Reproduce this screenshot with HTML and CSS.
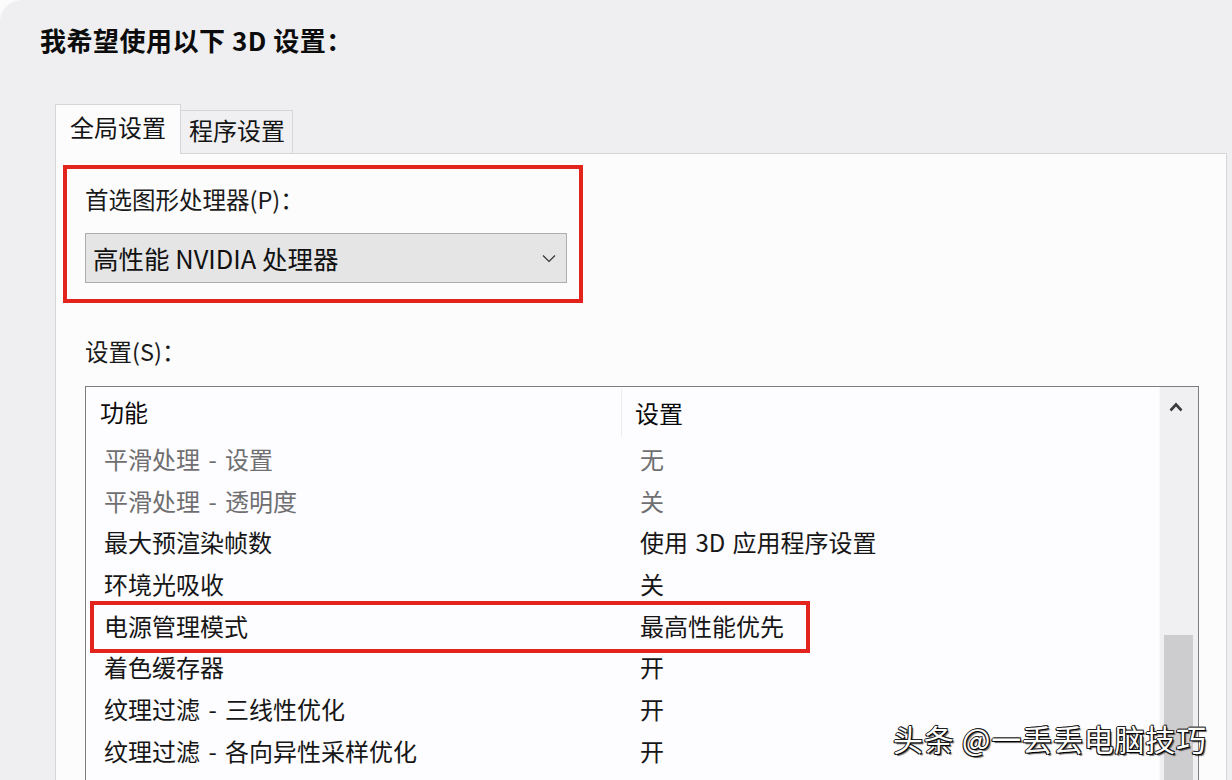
FILE: index.html
```html
<!DOCTYPE html>
<html lang="zh-CN">
<head>
<meta charset="utf-8">
<link rel="stylesheet" href="styles.css">
</head>
<body>
<div class="window">
  <h1 class="title">我希望使用以下 3D 设置：</h1>
  <div class="tabs">
    <div class="tab active">全局设置</div>
    <div class="tab">程序设置</div>
  </div>
  <div class="panel">
    <div class="mark-box">
      <div class="label">首选图形处理器(P)：</div>
      <div class="select">
        <span>高性能 NVIDIA 处理器</span>
        <svg class="chev" width="14" height="9" viewBox="0 0 14 9"><path d="M1 1.5 L7 7.5 L13 1.5" fill="none" stroke="#333" stroke-width="1.2"/></svg>
      </div>
    </div>
    <div class="label settings-label">设置(S)：</div>
    <div class="list">
      <div class="table">
        <div class="row head">
          <div class="c1">功能</div>
          <div class="c2">设置</div>
        </div>
        <div class="row dim"><div class="c1">平滑处理 - 设置</div><div class="c2">无</div></div>
        <div class="row dim"><div class="c1">平滑处理 - 透明度</div><div class="c2">关</div></div>
        <div class="row"><div class="c1">最大预渲染帧数</div><div class="c2">使用 3D 应用程序设置</div></div>
        <div class="row"><div class="c1">环境光吸收</div><div class="c2">关</div></div>
        <div class="row marked"><div class="c1">电源管理模式</div><div class="c2">最高性能优先</div><div class="row-mark"></div></div>
        <div class="row"><div class="c1">着色缓存器</div><div class="c2">开</div></div>
        <div class="row"><div class="c1">纹理过滤 - 三线性优化</div><div class="c2">开</div></div>
        <div class="row"><div class="c1">纹理过滤 - 各向异性采样优化</div><div class="c2">开</div></div>
      </div>
      <div class="scrollbar">
        <svg class="up" width="14" height="10" viewBox="0 0 14 10"><path d="M1.5 8.5 L7 2.5 L12.5 8.5" fill="none" stroke="#3c3c3c" stroke-width="2.6"/></svg>
        <div class="thumb"></div>
      </div>
    </div>
  </div>
  <div class="watermark">头条 @一丢丢电脑技巧</div>
</div>
</body>
</html>
```
FILE: styles.css
```css
html, body {
  margin: 0;
  padding: 0;
  background: #fbfbfc;
  overflow: hidden;
}
.window {
  position: relative;
  width: 1232px;
  height: 780px;
  box-sizing: border-box;
  padding: 25px 5px 0 40px;
  background: #efeff1;
  border-top-left-radius: 22px;
  font-family: "Noto Sans CJK SC", "Noto Sans", sans-serif;
  color: #141414;
  overflow: hidden;
}
.title {
  margin: 0;
  font-size: 26px;
  line-height: 30px;
  font-weight: 700;
  color: #0c0c0c;
  letter-spacing: 0.5px;
}
.tabs {
  display: flex;
  align-items: flex-end;
  margin: 49px 0 0 15px;
  height: 49px;
  position: relative;
  z-index: 2;
}
.tab {
  box-sizing: border-box;
  font-size: 24px;
  line-height: 30px;
}
.tab.active {
  width: 126px;
  height: 50px;
  margin-bottom: -1px;
  padding: 7px 0 0 14px;
  background: #fcfcfd;
  border: 1px solid #d6d6d8;
  border-bottom: none;
}
.tab:not(.active) {
  width: 112px;
  height: 43px;
  padding: 4px 0 0 8px;
  background: #f0f0f2;
  border: 1px solid #d6d6d8;
  border-left: none;
  border-bottom: none;
}
.panel {
  margin-left: 15px;
  height: 640px;
  box-sizing: border-box;
  border: 1px solid #d6d6d8;
  background: #fcfcfd;
  padding: 11px 0 0 29px;
}
.mark-box {
  width: 520px;
  height: 138px;
  box-sizing: border-box;
  margin-left: -22px;
  border: 4px solid #e3241c;
  padding: 15px 0 0 18px;
}
.label {
  font-size: 23.5px;
  line-height: 30px;
  color: #1a1a1a;
}
.select {
  margin-top: 19px;
  width: 482px;
  height: 50px;
  box-sizing: border-box;
  border: 1px solid #adadad;
  background: #e5e5e6;
  display: flex;
  align-items: center;
  justify-content: space-between;
  padding: 0 10px 2px 7px;
  font-size: 25.5px;
  color: #111;
}
.chev { margin-top: 3px; }
.settings-label {
  margin-top: 33px;
}
.list {
  margin-top: 20px;
  width: 1114px;
  height: 420px;
  box-sizing: border-box;
  border: 1px solid #7d7d80;
  border-bottom: none;
  display: flex;
  background: #fdfcfe;
}
.table {
  flex: 1;
}
.row {
  position: relative;
  display: flex;
  height: 41.7px;
  box-sizing: border-box;
  padding-bottom: 3px;
  align-items: center;
  font-size: 24px;
  color: #161616;
}
.row .c1 {
  width: 536px;
  padding-left: 18px;
  box-sizing: border-box;
  word-spacing: 3px;
}
.row .c2 {
  padding-left: 18px;
  word-spacing: 2px;
}
.row.head {
  height: 52px;
  padding-bottom: 0;
  color: #0a0a0a;
}
.row.head .c1 {
  padding-left: 14px;
  height: 48px;
  line-height: 46px;
  border-right: 1px solid #ececee;
}
.row.head .c2 {
  padding-left: 13px;
  padding-bottom: 2px;
}
.row.dim { color: #6f6f72; }
.row-mark {
  position: absolute;
  left: 4px;
  top: -5px;
  width: 720px;
  height: 52px;
  box-sizing: border-box;
  border: 4px solid #e3241c;
}
.scrollbar {
  width: 38px;
  background: #f0f0f2;
  border-left: 1px solid #f8f8f9;
  position: relative;
}
.up {
  display: block;
  margin: 15px 0 0 9px;
}
.thumb {
  position: absolute;
  left: 4px;
  top: 248px;
  width: 29px;
  height: 200px;
  background: #cdcdd0;
}
.watermark {
  position: absolute;
  left: 893px;
  top: 720px;
  font-size: 30px;
  line-height: 36px;
  color: #ffffff;
  text-shadow: 1px 1px 0 #000, -1px 0 0 #222, 0 -1px 0 #222, 1px -1px 0 #222, -1px 1px 0 #222, 2px 2px 1px rgba(0,0,0,0.6);
  letter-spacing: 0.8px;
}
```
